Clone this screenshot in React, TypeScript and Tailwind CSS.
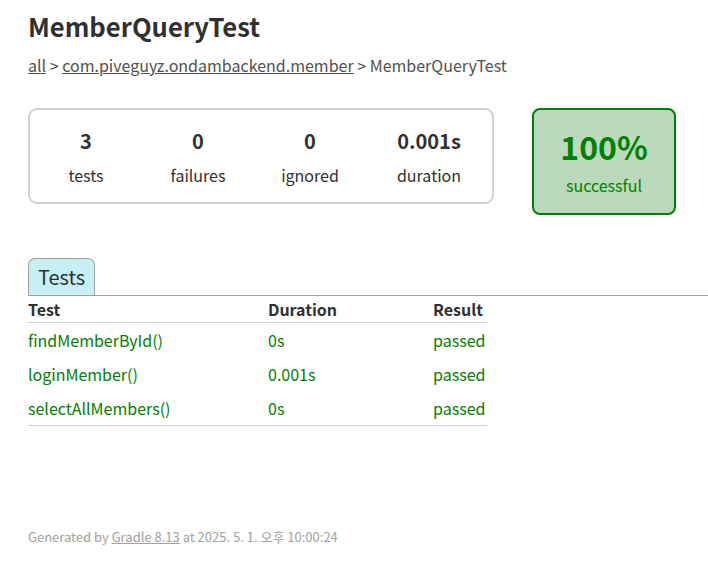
import React from 'react'

const rows = [
  { name: 'findMemberById()', duration: '0s', result: 'passed' },
  { name: 'loginMember()', duration: '0.001s', result: 'passed' },
  { name: 'selectAllMembers()', duration: '0s', result: 'passed' },
]

const counters = [
  { value: '3', label: 'tests', w: 'w-[112px]' },
  { value: '0', label: 'failures', w: 'w-[112px]' },
  { value: '0', label: 'ignored', w: 'w-[112px]' },
  { value: '0.001s', label: 'duration', w: 'w-[126px]' },
]

export default function App() {
  return (
    <div className="min-h-screen w-[708px] bg-white text-[16px] text-[#303030] font-['Noto_Sans_CJK_KR','Noto_Sans',sans-serif]">
      <div className="pl-[28px] pt-[8px]">
        <h1 className="text-[25.6px] font-bold leading-[36px]">MemberQueryTest</h1>
        <div className="mt-[9px] leading-[24px] text-[#505050]">
          <a className="underline">all</a> &gt; <a className="underline">com.piveguyz.ondambackend.member</a> &gt; MemberQueryTest
        </div>

        {/* summary */}
        <div className="mt-[31px] flex items-start">
          <div className="flex h-[96px] w-[466px] items-center rounded-[9px] border-2 border-[#d0d0d0]">
            {counters.map((c) => (
              <div key={c.label} className={`${c.w} pt-[2px] text-center`}>
                <div className="text-[20px] font-bold leading-[26px]">{c.value}</div>
                <div className="mt-[9px] leading-[24px]">{c.label}</div>
              </div>
            ))}
          </div>
          <div className="ml-[38px] flex h-[107px] w-[144px] flex-col items-center justify-center rounded-[8px] border-2 border-[#008000] bg-[#bbd9bb] text-[#008000]">
            <div className="text-[32px] font-bold leading-[38px]">100%</div>
            <div className="mt-[8px] leading-[24px]">successful</div>
          </div>
        </div>

        {/* tabs */}
        <div className="mt-[43px] border-b border-[#a0a0a0]">
          <div className="inline-block rounded-t-[7px] border border-b-0 border-[#a0a0a0] bg-[#c5f0f5] px-[9px] pb-[4px] pt-[4px] text-[20px] leading-[28px]">
            Tests
          </div>
        </div>

        <table className="border-collapse">
          <thead>
            <tr className="border-b border-[#d0d0d0]">
              <th className="w-[240px] p-0 text-left font-bold leading-[26px]">Test</th>
              <th className="w-[165px] p-0 text-left font-bold leading-[26px]">Duration</th>
              <th className="w-[54px] p-0 text-left font-bold leading-[26px]">Result</th>
            </tr>
          </thead>
          <tbody className="text-[#008000]">
            {rows.map((r, i) => (
              <tr key={r.name} className={i === rows.length - 1 ? 'border-b border-[#d0d0d0]' : ''}>
                <td className="whitespace-nowrap py-[5px] leading-[24px]">{r.name}</td>
                <td className="whitespace-nowrap py-[5px] leading-[24px]">{r.duration}</td>
                <td className="whitespace-nowrap py-[5px] leading-[24px]">{r.result}</td>
              </tr>
            ))}
          </tbody>
        </table>

        <div className="mt-[101px] text-[13px] leading-[20px] text-[#a0a0a0] whitespace-nowrap">
          Generated by <a className="underline">Gradle 8.13</a> at 2025. 5. 1. 오후 10:00:24
        </div>
      </div>
    </div>
  )
}
